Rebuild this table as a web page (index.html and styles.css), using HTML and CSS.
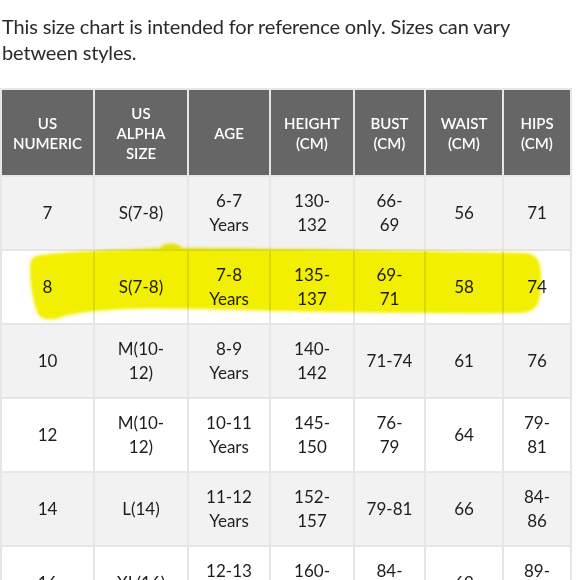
FILE: index.html
```html
<!DOCTYPE html>
<html>
<head>
<meta charset="utf-8">
<link rel="stylesheet" href="styles.css">
</head>
<body>
<div class="page">
  <p class="intro">This size chart is intended for reference only. Sizes can vary<br>between styles.</p>
  <div class="chart">
    <table class="sizes">
      <colgroup>
        <col class="c1"><col class="c2"><col class="c3"><col class="c4"><col class="c5"><col class="c6"><col class="c7">
      </colgroup>
      <thead>
        <tr>
          <th>US<br>NUMERIC</th>
          <th>US<br>ALPHA<br>SIZE</th>
          <th>AGE</th>
          <th>HEIGHT<br>(CM)</th>
          <th>BUST<br>(CM)</th>
          <th>WAIST<br>(CM)</th>
          <th>HIPS<br>(CM)</th>
        </tr>
      </thead>
      <tbody>
        <tr class="alt">
          <td>7</td><td>S(7-8)</td><td>6-7<br>Years</td><td>130-<br>132</td><td>66-<br>69</td><td>56</td><td>71</td>
        </tr>
        <tr>
          <td>8</td><td>S(7-8)</td><td>7-8<br>Years</td><td>135-<br>137</td><td>69-<br>71</td><td>58</td><td>74</td>
        </tr>
        <tr class="alt">
          <td>10</td><td>M(10-<br>12)</td><td>8-9<br>Years</td><td>140-<br>142</td><td>71-74</td><td>61</td><td>76</td>
        </tr>
        <tr>
          <td>12</td><td>M(10-<br>12)</td><td>10-11<br>Years</td><td>145-<br>150</td><td>76-<br>79</td><td>64</td><td>79-<br>81</td>
        </tr>
        <tr class="alt">
          <td>14</td><td>L(14)</td><td>11-12<br>Years</td><td>152-<br>157</td><td>79-81</td><td>66</td><td>84-<br>86</td>
        </tr>
        <tr>
          <td>16</td><td>XL(16)</td><td>12-13<br>Years</td><td>160-<br>165</td><td>84-<br>86</td><td>69</td><td>89-<br>91</td>
        </tr>
      </tbody>
    </table>
    <svg class="highlight" width="580" height="100" viewBox="0 0 580 100" aria-hidden="true">
      <defs>
        <filter id="soft" x="-5%" y="-20%" width="110%" height="140%">
          <feGaussianBlur stdDeviation="1.6"/>
        </filter>
      </defs>
      <path filter="url(#soft)" fill="#f3ef00" d="M36 14 C60 9 120 8 160 6 C164 0 178 0 182 6 C260 6 420 9 525 11 C540 12 542 24 541 44 C540 62 537 70 520 71 C420 72 300 70 200 67 C150 66 100 66 64 74 C52 80 40 78 37 70 C32 56 30 40 30 26 C30 18 32 15 36 14 Z"/>
    </svg>
  </div>
</div>
</body>
</html>
```

FILE: styles.css
```css
html, body {
  margin: 0;
  padding: 0;
  background: #ffffff;
}

.page {
  width: 580px;
  height: 580px;
  overflow: hidden;
  font-family: "Lato", "Open Sans", sans-serif;
  color: #222222;
}

.intro {
  margin: 13px 0 0 2px;
  font-size: 20px;
  line-height: 26px;
  font-weight: 400;
  letter-spacing: -0.15px;
  color: #2a2a2a;
  white-space: nowrap;
}

.chart {
  position: relative;
  margin-top: 23px;
}

.sizes {
  border-collapse: separate;
  border-spacing: 2px;
  background: #e6e6e6;
  table-layout: fixed;
  width: 572px;
}

.c1 { width: 91px; }
.c2 { width: 92px; }
.c3 { width: 80px; }
.c4 { width: 82px; }
.c5 { width: 69px; }
.c6 { width: 76px; }
.c7 { width: 66px; }

.sizes th {
  height: 85px;
  padding: 0;
  background: #666666;
  color: #ffffff;
  font-size: 15px;
  line-height: 20px;
  font-weight: 600;
  text-align: center;
  vertical-align: middle;
  white-space: nowrap;
}

.sizes td {
  height: 72px;
  padding: 0;
  background: #ffffff;
  font-size: 17px;
  line-height: 24px;
  text-align: center;
  vertical-align: middle;
  white-space: nowrap;
  color: #1e1e1e;
}

.sizes tr.alt td {
  background: #f2f2f2;
}

.highlight {
  position: absolute;
  left: 0;
  top: 154px;
  mix-blend-mode: multiply;
  pointer-events: none;
}
```
